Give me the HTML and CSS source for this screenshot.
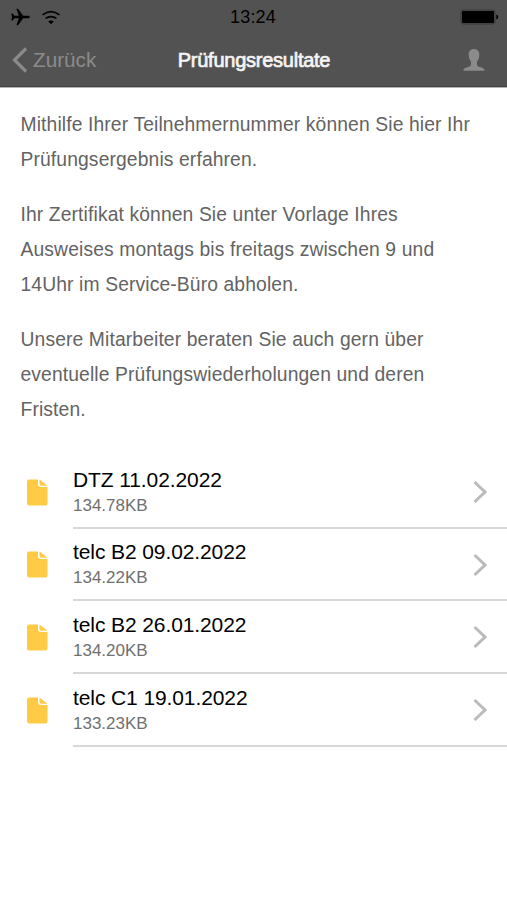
FILE: index.html
```html
<!DOCTYPE html>
<html lang="de">
<head>
<meta charset="utf-8">
<title>Prüfungsresultate</title>
<link rel="stylesheet" href="styles.css">
</head>
<body>
<header class="header">
  <div class="status">
    <div class="signals">
      <svg class="plane" width="19" height="18" viewBox="0 0 19 18"><path d="M18.800 9C18.800 8.100 17.700 7.800 16.500 7.800H12.200L7 .8H5.500L7.800 7.800H3.500L1.500 5.500H.3L1 9 .3 12.500H1.500L3.500 10.200H7.800L5.500 17.200H7L12.200 10.200h4.300c1.200 0 2.300-.3 2.300-1.200z"/></svg>
      <svg class="wifi" width="20" height="15" viewBox="0 0 20 15"><path d="M1.500 4.900Q10-1.700 18.500 4.900M4.500 8.400q5.500-3.700 11 0" fill="none" stroke="#000" stroke-width="1.700"/><path d="M7.200 11.400q2.800-2 5.600 0L10 14.200z"/></svg>
    </div>
    <span class="time">13:24</span>
    <svg class="battery" width="40" height="16" viewBox="0 0 40 16"><rect x="1" y="1" width="34" height="14" rx="2.500" fill="none" stroke="#353535"/><rect x="2" y="2" width="32" height="12" rx="1.200"/><path d="M36.300 5.500q2 .7 2 2.500t-2 2.500z"/></svg>
  </div>
  <nav class="nav">
    <a class="back"><svg width="16" height="26" viewBox="0 0 16 26"><path d="M14 1.500 2.500 13 14 24.500" fill="none" stroke="#8b8b8b" stroke-width="3.200"/></svg><span>Zurück</span></a>
    <h1 class="title">Prüfungsresultate</h1>
    <svg class="user" width="22" height="22" viewBox="0 0 22 22"><path d="M11 0c3.500 0 5.600 2.400 5.300 6-.2 2.900-.9 5-2.300 6.600v3c0 1.900 2.100 2.100 4.500 3 2 .7 3 1.500 3.200 3.200H.3c.2-1.700 1.200-2.500 3.200-3.200 2.400-.9 4.500-1.100 4.500-3v-3C6.600 11 5.900 8.900 5.700 6 5.400 2.400 7.500 0 11 0z" fill="#8b8b8b"/></svg>
  </nav>
</header>
<main>
  <section class="intro">
    <p>Mithilfe Ihrer Teilnehmernummer können Sie hier Ihr<br>Prüfungsergebnis erfahren.</p>
    <p>Ihr Zertifikat können Sie unter Vorlage Ihres<br>Ausweises montags bis freitags zwischen 9 und<br>14Uhr im Service-Büro abholen.</p>
    <p>Unsere Mitarbeiter beraten Sie auch gern über<br>eventuelle Prüfungswiederholungen und deren<br>Fristen.</p>
  </section>
  <ul class="files">
    <li class="file">
      <svg class="doc" width="21" height="27" viewBox="0 0 21 27"><path d="M2 .5h9V5q0 3 3 3h6.500v16.500q0 2-2 2H2q-2 0-2-2v-22q0-2 2-2zM12.500.5l8 6.300H14.300q-1.800 0-1.800-1.800z"/></svg>
      <div class="info"><div class="text"><span class="name">DTZ 11.02.2022</span><span class="size">134.78KB</span></div><svg class="chevron" width="14" height="24" viewBox="0 0 14 24"><path d="M1.500 2 12 12 1.500 22"/></svg></div>
    </li>
    <li class="file">
      <svg class="doc" width="21" height="27" viewBox="0 0 21 27"><path d="M2 .5h9V5q0 3 3 3h6.500v16.500q0 2-2 2H2q-2 0-2-2v-22q0-2 2-2zM12.500.5l8 6.300H14.300q-1.800 0-1.800-1.800z"/></svg>
      <div class="info"><div class="text"><span class="name">telc B2 09.02.2022</span><span class="size">134.22KB</span></div><svg class="chevron" width="14" height="24" viewBox="0 0 14 24"><path d="M1.500 2 12 12 1.500 22"/></svg></div>
    </li>
    <li class="file">
      <svg class="doc" width="21" height="27" viewBox="0 0 21 27"><path d="M2 .5h9V5q0 3 3 3h6.500v16.500q0 2-2 2H2q-2 0-2-2v-22q0-2 2-2zM12.500.5l8 6.300H14.300q-1.800 0-1.800-1.800z"/></svg>
      <div class="info"><div class="text"><span class="name">telc B2 26.01.2022</span><span class="size">134.20KB</span></div><svg class="chevron" width="14" height="24" viewBox="0 0 14 24"><path d="M1.500 2 12 12 1.500 22"/></svg></div>
    </li>
    <li class="file">
      <svg class="doc" width="21" height="27" viewBox="0 0 21 27"><path d="M2 .5h9V5q0 3 3 3h6.500v16.500q0 2-2 2H2q-2 0-2-2v-22q0-2 2-2zM12.500.5l8 6.300H14.300q-1.800 0-1.800-1.800z"/></svg>
      <div class="info"><div class="text"><span class="name">telc C1 19.01.2022</span><span class="size">133.23KB</span></div><svg class="chevron" width="14" height="24" viewBox="0 0 14 24"><path d="M1.500 2 12 12 1.500 22"/></svg></div>
    </li>
  </ul>
</main>
</body>
</html>
```
FILE: styles.css
```css
* { box-sizing: border-box; }
body {
  margin: 0;
  height: 900px;
  overflow: hidden;
  background: #fff;
  font-family: "Liberation Sans", Arial, sans-serif;
}
svg { display: block; flex: none; }
.header {
  height: 88px;
  background: #525252;
  border-bottom: 1px solid #b4b4b4;
  box-shadow: inset 0 -1px #434343;
}
.status {
  height: 34px;
  display: grid;
  grid-template-columns: 1fr auto 1fr;
  align-items: center;
  padding: 0 7px 0 11px;
}
.signals { display: flex; align-items: center; gap: 11px; }
.time { margin-right: 5px; font-size: 18px; letter-spacing: 0.2px; line-height: 34px; color: #000; }
.battery { justify-self: end; }
.nav {
  height: 52px;
  display: grid;
  grid-template-columns: 1fr auto 1fr;
  align-items: center;
  padding: 0 22px 0 12px;
}
.back {
  display: flex;
  align-items: center;
  gap: 5px;
  color: #8b8b8b;
  font-size: 20.7px;
}
.title {
  margin: 0 0 0 11px;
  font-size: 20px;
  font-weight: 400;
  letter-spacing: -0.25px;
  color: #f4f4f4;
  -webkit-text-stroke: 0.7px #f4f4f4;
}
.user { justify-self: end; }
.intro { padding: 18.8px 20.5px 0; height: 368px; }
.intro p {
  margin: 0 0 19.7px;
  font-size: 19.3px;
  line-height: 35.15px;
  letter-spacing: 0.12px;
  color: #636363;
  white-space: nowrap;
}
.files { margin: 0; padding: 0; list-style: none; }
.file {
  height: 72.7px;
  display: flex;
  padding-left: 27px;
}
.doc { margin: 22.5px 25px 0 0; fill: #ffcb45; }
.info {
  flex: 1;
  display: flex;
  justify-content: space-between;
  padding: 9.8px 20px 0 0;
  border-bottom: 2px solid #d8d8d8;
}
.text { display: flex; flex-direction: column; }
.name { font-size: 21px; line-height: 27px; letter-spacing: -0.1px; color: #000; }
.size { font-size: 17px; line-height: 26.4px; color: #707070; }
.chevron { margin-top: 14.3px; fill: none; stroke: #bbb; stroke-width: 3; }
```
